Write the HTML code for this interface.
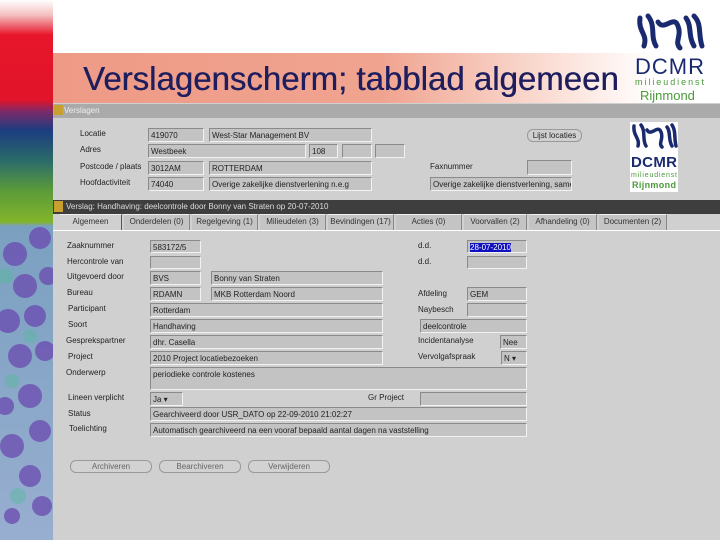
<!DOCTYPE html>
<html><head><meta charset="utf-8"><style>
*{margin:0;padding:0;box-sizing:border-box}
body{width:720px;height:540px;overflow:hidden;background:#fff;font-family:"Liberation Sans",sans-serif;position:relative}
.a{position:absolute}
.f{position:absolute;background:#c3c3c3;border-top:1px solid #8a8a8a;border-left:1px solid #8a8a8a;border-bottom:1px solid #f2f2f2;border-right:1px solid #f2f2f2;font-size:8px;color:#222;padding:2px 2px;white-space:nowrap;overflow:hidden}
.l{position:absolute;font-size:8px;color:#222;white-space:nowrap}
.t{position:absolute;top:214px;height:16px;background:#c4c4c4;border-top:1px solid #eee;border-right:1px solid #888;font-size:8px;color:#333;text-align:center;line-height:14px}
.b{position:absolute;top:460px;height:13px;border:1px solid #999;border-radius:6px;background:#d2d2d2;font-size:8px;color:#666;text-align:center;line-height:11px;width:82px}
</style></head><body>
<div class="a" style="left:0;top:0;width:53px;height:540px;background:linear-gradient(#fff 0px,#f4c0c0 15px,#e8162a 35px,#e0142a 100px,#7a2a6a 112px,#1c3c80 130px,#2a6a6a 160px,#5a9a3a 190px,#82b42a 222px,#7aa0c0 226px,#98aed0 540px)"></div>
<svg class="a" style="left:0;top:226px" width="53" height="314">
<g fill="#6a4ab0" opacity=".75"><circle cx="15" cy="28" r="12"/><circle cx="40" cy="12" r="11"/><circle cx="25" cy="60" r="12"/><circle cx="48" cy="50" r="9"/><circle cx="8" cy="95" r="12"/><circle cx="35" cy="90" r="11"/><circle cx="20" cy="130" r="12"/><circle cx="45" cy="125" r="10"/><circle cx="30" cy="170" r="12"/><circle cx="5" cy="180" r="9"/><circle cx="40" cy="205" r="11"/><circle cx="12" cy="220" r="12"/><circle cx="30" cy="250" r="11"/><circle cx="42" cy="280" r="10"/><circle cx="12" cy="290" r="8"/></g>
<g fill="#5ab8a0" opacity=".5"><circle cx="5" cy="50" r="8"/><circle cx="30" cy="110" r="7"/><circle cx="12" cy="155" r="7"/><circle cx="18" cy="270" r="8"/></g>
</svg>
<div class="a" style="left:53px;top:53px;width:600px;height:50px;background:linear-gradient(90deg,#ee9a86 0%,#f0a490 55%,#fbe2da 85%,#fff 100%)"></div>
<div class="a" style="left:83px;top:60px;font-size:33px;line-height:38px;color:#1e1e5e;text-shadow:0.4px 0 0 #1e1e5e">Verslagenscherm; tabblad algemeen</div>
<svg class="a" style="left:634px;top:12px" width="72" height="92">
<path d="M6 6 C4 20,14 22,10 34 M14 4 C22 14,16 24,22 34 M24 10 C30 20,40 2,44 14 C48 24,40 30,46 36 M52 6 C58 14,54 24,60 34 M60 4 C68 12,64 22,68 34" stroke="#1a2a6e" stroke-width="5" fill="none" stroke-linecap="round"/>
<text x="1" y="62" font-family="Liberation Sans" font-size="22" fill="#1a2a6e" textLength="69">DCMR</text>
<text x="1" y="73" font-family="Liberation Sans" font-size="9" fill="#4a9a3a" textLength="69">milieudienst</text>
<text x="6" y="88" font-family="Liberation Sans" font-size="13" fill="#4a9a3a">Rijnmond</text>
</svg>
<div class="a" style="left:53px;top:103px;width:667px;height:437px;background:#d0d0d0"></div>
<div class="a" style="left:53px;top:104px;width:667px;height:14px;background:#aaaaaa"></div>
<div class="l" style="left:64px;top:106px;color:#eee">Verslagen</div>
<div class="a" style="left:54px;top:105px;width:9px;height:10px;background:#c8a030"></div>
<div class="l" style="left:80px;top:129px">Locatie</div>
<div class="l" style="left:80px;top:145px">Adres</div>
<div class="l" style="left:80px;top:162px">Postcode / plaats</div>
<div class="l" style="left:80px;top:178px">Hoofdactiviteit</div>
<div class="f" style="left:148px;top:128px;width:56px;height:14px">419070</div>
<div class="f" style="left:209px;top:128px;width:163px;height:14px">West-Star Management BV</div>
<div class="f" style="left:148px;top:144px;width:158px;height:14px">Westbeek</div>
<div class="f" style="left:309px;top:144px;width:29px;height:14px">108</div>
<div class="f" style="left:342px;top:144px;width:30px;height:14px"></div>
<div class="f" style="left:375px;top:144px;width:30px;height:14px"></div>
<div class="f" style="left:148px;top:161px;width:56px;height:14px">3012AM</div>
<div class="f" style="left:209px;top:161px;width:163px;height:14px">ROTTERDAM</div>
<div class="f" style="left:148px;top:177px;width:56px;height:14px">74040</div>
<div class="f" style="left:209px;top:177px;width:163px;height:14px">Overige zakelijke dienstverlening n.e.g</div>
<div class="l" style="left:430px;top:162px">Faxnummer</div>
<div class="f" style="left:527px;top:160px;width:45px;height:15px"></div>
<div class="f" style="left:430px;top:177px;width:142px;height:14px">Overige zakelijke dienstverlening, samen</div>
<div class="a" style="left:527px;top:129px;width:55px;height:13px;border:1px solid #999;border-radius:6px;font-size:8px;text-align:center;line-height:11px;color:#222">Lijst locaties</div>
<svg class="a" style="left:630px;top:122px" width="48" height="70"><rect width="48" height="70" fill="#fff"/>
<path d="M4 4 C3 14,10 16,8 24 M11 3 C16 10,12 18,16 24 M17 8 C21 15,28 2,31 10 C34 17,28 21,32 25 M37 5 C41 10,38 18,42 24 M42 3 C46 9,44 16,46 24" stroke="#1a2a6e" stroke-width="3.5" fill="none" stroke-linecap="round"/>
<text x="1" y="45" font-family="Liberation Sans" font-size="15" font-weight="bold" fill="#1a2a6e" textLength="46">DCMR</text>
<text x="1" y="55" font-family="Liberation Sans" font-size="7" fill="#4a9a3a" textLength="46">milieudienst</text>
<text x="2" y="66" font-family="Liberation Sans" font-size="9" font-weight="bold" fill="#4a9a3a" textLength="44">Rijnmond</text></svg>
<div class="a" style="left:53px;top:200px;width:667px;height:14px;background:#3e3e3e"></div>
<div class="a" style="left:54px;top:201px;width:9px;height:11px;background:#c8a030"></div>
<div class="l" style="left:66px;top:202px;color:#ddd">Verslag: Handhaving: deelcontrole door Bonny van Straten op 20-07-2010</div>
<div class="a" style="left:53px;top:214px;width:667px;height:17px;background:#d0d0d0;border-bottom:1px solid #fff"></div>
<div class="t" style="left:60px;width:62px;background:#d0d0d0;border-right:1px solid #555">Algemeen</div>
<div class="t" style="left:124px;width:66px">Onderdelen (0)</div>
<div class="t" style="left:192px;width:66px">Regelgeving (1)</div>
<div class="t" style="left:260px;width:66px">Milieudelen (3)</div>
<div class="t" style="left:328px;width:66px">Bevindingen (17)</div>
<div class="t" style="left:396px;width:66px">Acties (0)</div>
<div class="t" style="left:464px;width:63px">Voorvallen (2)</div>
<div class="t" style="left:529px;width:68px">Afhandeling (0)</div>
<div class="t" style="left:599px;width:68px">Documenten (2)</div>
<div class="l" style="left:67px;top:241px">Zaaknummer</div>
<div class="l" style="left:67px;top:257px">Hercontrole van</div>
<div class="l" style="left:67px;top:272px">Uitgevoerd door</div>
<div class="l" style="left:67px;top:288px">Bureau</div>
<div class="l" style="left:68px;top:304px">Participant</div>
<div class="l" style="left:68px;top:320px">Soort</div>
<div class="l" style="left:66px;top:336px">Gesprekspartner</div>
<div class="l" style="left:68px;top:352px">Project</div>
<div class="l" style="left:66px;top:368px">Onderwerp</div>
<div class="l" style="left:68px;top:393px">Lineen verplicht</div>
<div class="l" style="left:68px;top:409px">Status</div>
<div class="l" style="left:69px;top:424px">Toelichting</div>
<div class="f" style="left:150px;top:240px;width:51px;height:13px">583172/5</div>
<div class="f" style="left:150px;top:256px;width:51px;height:13px"></div>
<div class="f" style="left:150px;top:271px;width:51px;height:14px">BVS</div>
<div class="f" style="left:211px;top:271px;width:172px;height:14px">Bonny van Straten</div>
<div class="f" style="left:150px;top:287px;width:51px;height:14px">RDAMN</div>
<div class="f" style="left:211px;top:287px;width:172px;height:14px">MKB Rotterdam Noord</div>
<div class="f" style="left:150px;top:303px;width:233px;height:14px">Rotterdam</div>
<div class="f" style="left:150px;top:319px;width:233px;height:14px">Handhaving</div>
<div class="f" style="left:150px;top:335px;width:233px;height:14px">dhr. Casella</div>
<div class="f" style="left:150px;top:351px;width:233px;height:14px">2010 Project locatiebezoeken</div>
<div class="f" style="left:150px;top:367px;width:377px;height:23px">periodieke controle kostenes</div>
<div class="f" style="left:150px;top:392px;width:33px;height:14px">Ja ▾</div>
<div class="l" style="left:368px;top:393px">Gr Project</div>
<div class="f" style="left:420px;top:392px;width:107px;height:14px"></div>
<div class="f" style="left:150px;top:407px;width:377px;height:14px">Gearchiveerd door USR_DATO op 22-09-2010 21:02:27</div>
<div class="f" style="left:150px;top:423px;width:377px;height:14px">Automatisch gearchiveerd na een vooraf bepaald aantal dagen na vaststelling</div>
<div class="l" style="left:418px;top:241px">d.d.</div>
<div class="l" style="left:418px;top:257px">d.d.</div>
<div class="f" style="left:467px;top:240px;width:60px;height:13px"><span style="background:#1010c0;color:#fff">28-07-2010</span></div>
<div class="f" style="left:467px;top:256px;width:60px;height:13px"></div>
<div class="l" style="left:418px;top:289px">Afdeling</div>
<div class="f" style="left:467px;top:287px;width:60px;height:14px">GEM</div>
<div class="l" style="left:418px;top:305px">Naybesch</div>
<div class="f" style="left:467px;top:303px;width:60px;height:14px"></div>
<div class="f" style="left:420px;top:319px;width:107px;height:14px">deelcontrole</div>
<div class="l" style="left:418px;top:336px">Incidentanalyse</div>
<div class="f" style="left:500px;top:335px;width:27px;height:14px">Nee</div>
<div class="l" style="left:418px;top:352px">Vervolgafspraak</div>
<div class="f" style="left:501px;top:351px;width:26px;height:14px">N ▾</div>
<div class="b" style="left:70px">Archiveren</div>
<div class="b" style="left:159px">Bearchiveren</div>
<div class="b" style="left:248px">Verwijderen</div>
</body></html>
